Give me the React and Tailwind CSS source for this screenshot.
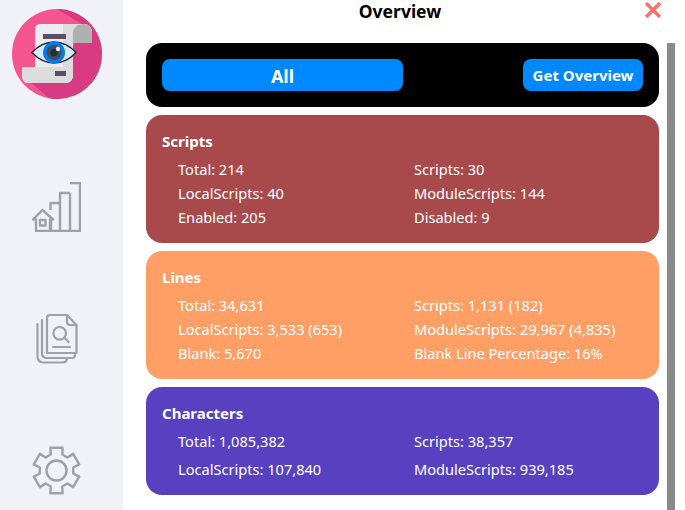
const rows = [
  {
    title: "Scripts",
    bg: "bg-[#a8494b]",
    items: [
      ["Total: 214", "Scripts: 30"],
      ["LocalScripts: 40", "ModuleScripts: 144"],
      ["Enabled: 205", "Disabled: 9"],
    ],
  },
  {
    title: "Lines",
    bg: "bg-[#ff9f66]",
    items: [
      ["Total: 34,631", "Scripts: 1,131 (182)"],
      ["LocalScripts: 3,533 (653)", "ModuleScripts: 29,967 (4,835)"],
      ["Blank: 5,670", "Blank Line Percentage: 16%"],
    ],
  },
  {
    title: "Characters",
    bg: "bg-[#5741c0]",
    items: [
      ["Total: 1,085,382", "Scripts: 38,357"],
      ["LocalScripts: 107,840", "ModuleScripts: 939,185"],
    ],
    tall: true,
  },
];

const Logo = () => (
  <svg width="90" height="90" viewBox="0 0 90 90" className="block">
    <defs>
      <clipPath id="logoClip">
        <circle cx="45" cy="45" r="45" />
      </clipPath>
    </defs>
    <g clipPath="url(#logoClip)">
      <rect width="90" height="90" fill="#f4558f" />
      <path d="M45 0L90 0V90H38L10 66L62 36L70 15z" fill="#d83b82" />
      <path d="M29 15H72c5 0 8 4 8 9v10H61v32c0 5-3 8-8 8H16c-4 0-6-3-6-8v-8H23V21c0-4 2-6 6-6z" fill="#ececec" />
      <path d="M51 15H72c5 0 8 4 8 9v10H61v32c0 5-3 8-8 8H16c-4 0-6-3-6-8v-8H51z" fill="#dcdcdc" />
      <path d="M72 15c5 0 8 4 8 9v10H61V24c0-5 4-9 11-9z" fill="#b0b0b0" />
      <rect x="31" y="25" width="23" height="5" fill="#5b4f66" />
      <rect x="43" y="62" width="11" height="5" fill="#5b4f66" />
      <path d="M20 43.5C27 36 33 33 42 33s15 3 22 10.5C57 51 51 54 42 54s-15-3-22-10.5z" fill="#d4ebfa" stroke="#1c2530" strokeWidth="1.3" />
      <circle cx="42" cy="43.5" r="11" fill="#0a78e8" />
      <circle cx="42" cy="43.5" r="7.5" fill="#3d4f5c" />
      <circle cx="42" cy="43.5" r="3.8" fill="#20303c" />
      <circle cx="46" cy="40" r="2.2" fill="#e8f2f8" />
    </g>
  </svg>
);

const HomeBars = () => (
  <svg width="49" height="50" viewBox="0 0 49 50" fill="none" stroke="#a0a0a6" strokeWidth="2.4" strokeLinejoin="round" className="block">
    <path d="M38 1h10v48H19V37M28 49V11h10M38 11v38M28 21H18.5v7" />
    <path d="M1 37.5l9.5-9.5 10.5 9.5H18V49H4V37.5z" />
    <rect x="8" y="38" width="5.5" height="5.5" />
  </svg>
);

const Docs = () => (
  <svg width="42" height="50" viewBox="0 0 42 50" fill="none" stroke="#a0a0a6" strokeWidth="2.2" strokeLinejoin="round" strokeLinecap="round" className="block">
    <path d="M1.500 10v32c0 4 2 6.500 6 6.500H26c3 0 5-1.500 5-4.500" />
    <path d="M6 6v33c0 3 2 5 5 5h25c2 0 3-1 3-3" />
    <path d="M11 39V4c0-2 1-3 3-3h17l9.500 10v28H11z" />
    <path d="M31 1v7c0 2 1 3 3 3h6.500" />
    <circle cx="23.700" cy="19.300" r="6.300" />
    <path d="M28.500 24l4.200 4M17 33h17" />
  </svg>
);

// six flat teeth, first one pointing straight up
const gearPath = () => {
  const pt = (r, deg) => {
    const a = (deg * Math.PI) / 180;
    return `${(24.5 + r * Math.sin(a)).toFixed(2)} ${(24.5 - r * Math.cos(a)).toFixed(2)}`;
  };
  let d = "";
  for (let i = 0; i < 6; i++) {
    const c = i * 60;
    d += `${i === 0 ? "M" : "L"}${pt(17, c - 20)} L${pt(23.5, c - 15)} L${pt(23.5, c + 15)} L${pt(17, c + 20)} `;
  }
  return d + "Z";
};

const Gear = () => (
  <svg width="49" height="49" viewBox="0 0 49 49" fill="none" stroke="#a0a0a6" strokeWidth="2.4" strokeLinejoin="round" className="block">
    <path d={gearPath()} />
    <circle cx="24.500" cy="24.500" r="10" />
  </svg>
);

const CloseIcon = () => (
  <svg width="16" height="16" viewBox="0 0 16 16" stroke="#ff7066" strokeWidth="3.400" className="block">
    <path d="M1 1l14 14M15 1L1 15" />
  </svg>
);

const Row = ({ left, right, tall }) => (
  <div className={`flex ${tall ? "h-[28px]" : "h-6"} items-center`}>
    <div className="w-[236px]">{left}</div>
    <div>{right}</div>
  </div>
);

export default function App() {
  return (
    <div
      className="flex w-[685px] h-[510px] overflow-hidden bg-white text-white"
      style={{ fontFamily: '"Noto Sans", sans-serif' }}
    >
      <aside className="w-[123px] h-full shrink-0 bg-[#f0f2f7] flex flex-col">
        <div className="mt-[9px] ml-[12px]">
          <Logo />
        </div>
        <div className="mt-[83px] ml-[32px]">
          <HomeBars />
        </div>
        <div className="mt-[82px] ml-[36px]">
          <Docs />
        </div>
        <div className="mt-[82px] ml-[32px]">
          <Gear />
        </div>
      </aside>
      <main className="relative flex flex-1">
        <div className="ml-[23px] w-[513px] flex flex-col gap-2">
          <div className="h-[35px] pr-[5px] text-center text-black font-bold text-[17.5px] leading-[23px]">Overview</div>
          <div className="h-[64px] rounded-[16px] bg-black flex items-center justify-between px-4">
            <div className="w-[241px] h-8 rounded-lg bg-[#0088ff] text-center font-bold text-lg leading-[34px]">All</div>
            <div className="w-[120px] h-8 rounded-lg bg-[#0088ff] text-center font-bold text-[15px] leading-8">Get Overview</div>
          </div>
          {rows.map((card) => (
            <section key={card.title} className={`rounded-[16px] ${card.bg} pl-4 pt-[16px] h-[128px] last:h-[108px] text-[14.6px]`}>
              <h2 className={`font-bold text-[15px] h-5 leading-5 ${card.tall ? "mb-[5px]" : "mb-[7px]"}`}>{card.title}</h2>
              <div className="pl-4">
                {card.items.map(([left, right]) => (
                  <Row key={left} left={left} right={right} tall={card.tall} />
                ))}
              </div>
            </section>
          ))}
        </div>
        <div className="ml-2 mt-[43px] w-2 bg-[#8a8a8a]" />
        <button className="absolute left-[522px] top-[2px]">
          <CloseIcon />
        </button>
      </main>
    </div>
  );
}
